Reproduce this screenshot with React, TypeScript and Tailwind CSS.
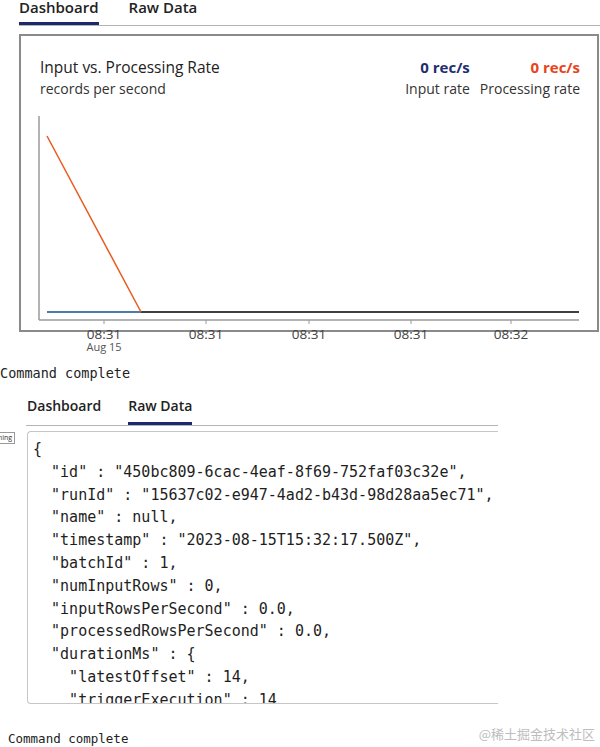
import React from "react";

const ticks = [83, 185, 288, 390, 490];

const json = [
  "{",
  '  "id" : "450bc809-6cac-4eaf-8f69-752faf03c32e",',
  '  "runId" : "15637c02-e947-4ad2-b43d-98d28aa5ec71",',
  '  "name" : null,',
  '  "timestamp" : "2023-08-15T15:32:17.500Z",',
  '  "batchId" : 1,',
  '  "numInputRows" : 0,',
  '  "inputRowsPerSecond" : 0.0,',
  '  "processedRowsPerSecond" : 0.0,',
  '  "durationMs" : {',
  '    "latestOffset" : 14,',
  '    "triggerExecution" : 14',
  "  },",
];

const RateChart = () => {
  return (
    <svg width="576" height="229" className="block overflow-visible" overflow="visible">
      <line x1="18" y1="16" x2="18" y2="220" stroke="#9a9a9a" strokeWidth="1.5" />
      <line x1="18" y1="220" x2="558" y2="220" stroke="#9a9a9a" strokeWidth="1.5" />
      {ticks.map((x) => (
        <line key={x} x1={x} y1="220" x2={x} y2="224" stroke="#9a9a9a" strokeWidth="1" />
      ))}
      <line x1="120" y1="212" x2="558" y2="212" stroke="#3f3f3f" strokeWidth="2" />
      <line x1="26" y1="212" x2="120" y2="212" stroke="#4f7bab" strokeWidth="2" />
      <line x1="26" y1="36" x2="120" y2="212" stroke="#ea5a1c" strokeWidth="1.5" />
      {ticks.map((x, i) => (
        <text
          key={"t" + x}
          x={x}
          y="239"
          textAnchor="middle"
          fontSize="13.5"
          fill="#444"
          fontFamily="'Open Sans', sans-serif"
        >
          {i === 4 ? "08:32" : "08:31"}
        </text>
      ))}
      <text x="83" y="251" textAnchor="middle" fontSize="11" fill="#555" fontFamily="'Open Sans', sans-serif">
        Aug 15
      </text>
    </svg>
  );
};

export default function App() {
  return (
    <div className="relative w-[600px] h-[747px] overflow-hidden bg-white text-[#222] font-['Open_Sans',sans-serif]">
      {/* first output: dashboard tab */}
      <div className="-mt-[5px]">
        <div className="ml-[19px] flex border-b border-[#b4b4b4]">
          <div className="border-b-[3px] border-[#1c2a6b] pb-[3px] text-[15px] font-semibold leading-[24px]">
            Dashboard
          </div>
          <div className="ml-[30px] border-b-[3px] border-transparent pb-[3px] text-[15px] font-semibold leading-[24px]">
            Raw Data
          </div>
        </div>
        <div className="ml-[19px] mt-[8px] h-[298px] w-[580px] border-2 border-[#8a8a8a]">
          <div className="flex h-[64px] items-start justify-between pl-[19px] pr-[17px] pt-[20px]">
            <div>
              <div className="text-[15.5px] leading-[22px]">Input vs. Processing Rate</div>
              <div className="text-[14px] leading-[22px] text-[#333]">records per second</div>
            </div>
            <div className="flex gap-[10px] text-right">
              <div>
                <div className="text-[15px] font-bold leading-[22px] text-[#1f2e6e]">0 rec/s</div>
                <div className="text-[14px] leading-[22px] text-[#333]">Input rate</div>
              </div>
              <div>
                <div className="text-[15px] font-bold leading-[22px] text-[#e8431b]">0 rec/s</div>
                <div className="text-[14px] leading-[22px] text-[#333]">Processing rate</div>
              </div>
            </div>
          </div>
          <RateChart />
        </div>
      </div>

      <div className="mt-[32px] font-['DejaVu_Sans_Mono',monospace] text-[13.5px] leading-[18px] text-[#222]">
        Command complete
      </div>

      {/* second output: raw data tab */}
      <div className="mt-[12px] flex">
        <div className="flex w-[15px] shrink-0 justify-end overflow-hidden pt-[38px]">
          <div className="h-[12px] whitespace-nowrap border border-[#999] bg-white px-[2px] text-[7px] leading-[10px] text-[#333]">
            Stop streaming
          </div>
        </div>
        <div className="ml-[11px] w-[472px]">
          <div className="flex border-b border-[#b4b4b4] pl-[1px]">
            <div className="border-b-[3px] border-transparent pb-[4px] text-[14px] font-semibold leading-[24px]">
              Dashboard
            </div>
            <div className="ml-[27px] border-b-[3px] border-[#1c2a6b] pb-[4px] text-[14px] font-semibold leading-[24px]">
              Raw Data
            </div>
          </div>
          <div className="ml-[1px] mt-[5px] h-[273px] overflow-hidden rounded-l-[4px] border-y border-l border-[#c6c6c6] pl-[5px] pt-[6px]">
            <pre className="font-['DejaVu_Sans_Mono',monospace] text-[15px] leading-[22.8px] text-[#1e1e1e]">
              {json.join("\n")}
            </pre>
          </div>
        </div>
      </div>

      <div className="mt-[20px] flex items-end justify-between">
        <div className="ml-[8px] font-['DejaVu_Sans_Mono',monospace] text-[12.5px] leading-[16px] text-[#222]">
          Command complete
        </div>
        <div className="mr-[5px] mb-[3px] font-['Noto_Sans_CJK_SC',sans-serif] text-[13px] text-[#bdbdbd]">
          @稀土掘金技术社区
        </div>
      </div>
    </div>
  );
}
